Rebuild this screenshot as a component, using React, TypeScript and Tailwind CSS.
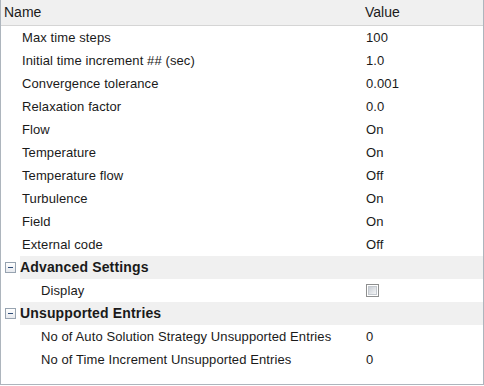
import type { ReactNode } from 'react';

type Row = { label: string; value: string };

const mainRows: Row[] = [
  { label: 'Max time steps', value: '100' },
  { label: 'Initial time increment ## (sec)', value: '1.0' },
  { label: 'Convergence tolerance', value: '0.001' },
  { label: 'Relaxation factor', value: '0.0' },
  { label: 'Flow', value: 'On' },
  { label: 'Temperature', value: 'On' },
  { label: 'Temperature flow', value: 'Off' },
  { label: 'Turbulence', value: 'On' },
  { label: 'Field', value: 'On' },
  { label: 'External code', value: 'Off' },
];

const unsupported: Row[] = [
  { label: 'No of Auto Solution Strategy Unsupported Entries', value: '0' },
  { label: 'No of Time Increment Unsupported Entries', value: '0' },
];

function PropRow({ label, indent, children }: { label: string; indent: string; children: ReactNode }) {
  return (
    <div className="flex h-[23px] items-center text-[13px] tracking-[0.1px] text-[#1a1a1a]">
      <div className={`w-[361px] shrink-0 ${indent}`}>{label}</div>
      <div className="flex-1 pl-[4px]">{children}</div>
    </div>
  );
}

function GroupRow({ title }: { title: string }) {
  return (
    <div className="flex h-[23px] items-center">
      <div className="flex w-[19px] shrink-0 items-center justify-start pl-[4px]">
        <div className="flex h-[11px] w-[11px] items-center justify-center border border-[#97a3b0] bg-gradient-to-b from-white to-[#e6e9ee]">
          <div className="h-[1px] w-[5px] bg-[#2f4d78]" />
        </div>
      </div>
      <div className="flex h-full flex-1 items-center bg-[#f0f0f0] text-[14px] font-bold tracking-[0.15px] text-[#1a1a1a]">
        {title}
      </div>
    </div>
  );
}

function Checkbox() {
  return (
    <div className="flex h-[13px] w-[13px] items-center justify-center border border-[#8e8f8f] bg-white">
      <div className="h-[9px] w-[9px] border border-[#c4c9cf] bg-gradient-to-br from-[#c9ced5] to-[#f4f5f6]" />
    </div>
  );
}

export default function App() {
  return (
    <div className="h-[386px] w-[484px] bg-white" style={{ fontFamily: '"Liberation Sans", Arial, sans-serif' }}>
      <div className="flex h-[385px] flex-col border-x border-b border-[#adb5bd]">
        <div className="flex h-[26px] shrink-0 items-center border-b border-[#d5d5d5] bg-[#f0f0f0] text-[14px] text-[#1a1a1a]">
          <div className="w-[361px] shrink-0 pl-[3px]">Name</div>
          <div className="flex-1 pl-[3px]">Value</div>
        </div>

        {mainRows.map((row) => (
          <PropRow key={row.label} label={row.label} indent="pl-[21px]">
            {row.value}
          </PropRow>
        ))}

        <GroupRow title="Advanced Settings" />
        <PropRow label="Display" indent="pl-[40px]">
          <Checkbox />
        </PropRow>

        <GroupRow title="Unsupported Entries" />
        {unsupported.map((row) => (
          <PropRow key={row.label} label={row.label} indent="pl-[40px]">
            {row.value}
          </PropRow>
        ))}
      </div>
    </div>
  );
}
